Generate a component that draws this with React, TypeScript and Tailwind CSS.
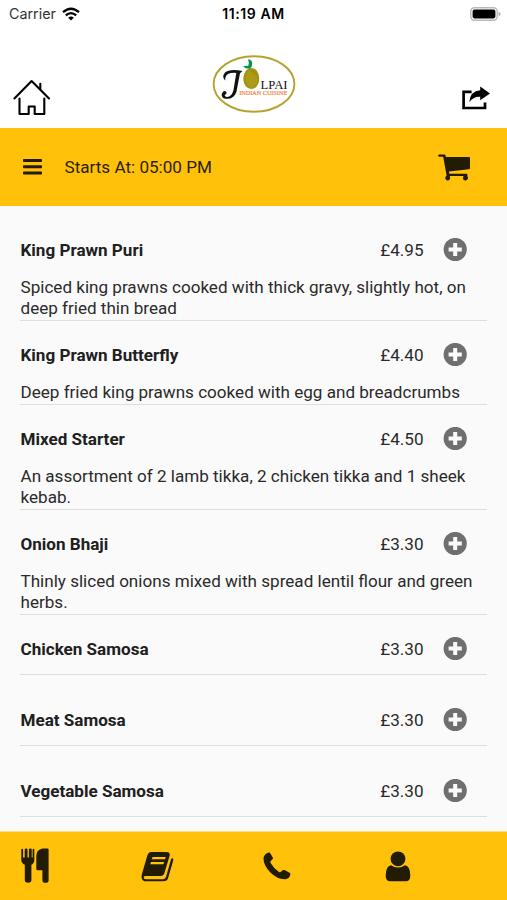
import React from "react";

type Item = { name: string; price: string; desc?: string[] };

const items: Item[] = [
  {
    name: "King Prawn Puri",
    price: "£4.95",
    desc: ["Spiced king prawns cooked with thick gravy, slightly hot, on", "deep fried thin bread"],
  },
  { name: "King Prawn Butterfly", price: "£4.40", desc: ["Deep fried king prawns cooked with egg and breadcrumbs"] },
  {
    name: "Mixed Starter",
    price: "£4.50",
    desc: ["An assortment of 2 lamb tikka, 2 chicken tikka and 1 sheek", "kebab."],
  },
  {
    name: "Onion Bhaji",
    price: "£3.30",
    desc: ["Thinly sliced onions mixed with spread lentil flour and green", "herbs."],
  },
  { name: "Chicken Samosa", price: "£3.30" },
  { name: "Meat Samosa", price: "£3.30" },
  { name: "Vegetable Samosa", price: "£3.30" },
];

function Wifi() {
  return (
    <svg width="18" height="14" viewBox="0 0 18 14" fill="none" stroke="#000" strokeWidth="2.3">
      <path d="M1 5.2Q9-1.8 17 5.2" />
      <path d="M3.8 8.3Q9 3.9 14.2 8.3" />
      <path d="M6.2 10.8Q9 8.2 11.8 10.8L9 13.6Z" fill="#000" stroke="none" />
    </svg>
  );
}

function Battery() {
  return (
    <svg width="31" height="14" viewBox="0 0 31 14">
      <rect x="0.8" y="0.8" width="26.4" height="12.4" rx="3.6" fill="#fff" stroke="#b9b9b9" strokeWidth="1.4" />
      <rect x="2.6" y="2.6" width="22.8" height="8.8" rx="1.8" fill="#000" />
      <path d="M28.6 4.8Q30.6 5.6 30.6 7T28.6 9.2Z" fill="#aaa" />
    </svg>
  );
}

function Home() {
  return (
    <svg width="38" height="37" viewBox="0 0 38 37" fill="none" stroke="#000" strokeWidth="2.1" strokeLinecap="round" strokeLinejoin="round">
      <path d="M1.4 19.5L18.6 2L36 19.5" />
      <path d="M27.3 10.2V4.8" />
      <path d="M6.5 19.5V35H15.7V27.5H21.7V35H31.3V19.5" />
    </svg>
  );
}

function Share() {
  return (
    <svg width="28" height="24" viewBox="0 0 28 24">
      <path d="M9.6 5.8H1.6V22H23V16.6" fill="none" stroke="#000" strokeWidth="2.7" />
      <path d="M18.2 .4L28 7.4L18.2 14.2V10.7Q11.5 10.2 7.3 16.2Q8 5 18.2 4.2Z" />
    </svg>
  );
}

function Logo() {
  return (
    <svg width="84" height="60" viewBox="0 0 84 60">
      <ellipse cx="42" cy="30" rx="40.4" ry="27.8" fill="#fff" stroke="#b6a230" strokeWidth="1.9" />
      <ellipse cx="39.3" cy="24.5" rx="8" ry="10.6" fill="#a39112" />
      <path d="M36 16.5Q32.5 22 34.5 29Q36 33 39 34.5Q44 32 46 26Q44 20 36 16.5Z" fill="#b5a01e" opacity=".6" />
      <path d="M31 12.6Q34.2 11.2 36.2 12Q37.6 9 36 5.2Q40.6 5.4 40.2 10.4Q40 13.6 37.6 14.8Q33.6 14.8 31 12.6Z" fill="#07924f" />
      <path
        d="M30.5 17Q17.5 14.5 12.8 18.7Q9.4 23 13.3 26.4Q12.7 20.4 18.6 19.1Q22 18.5 24.3 18.9L21.5 36Q19.7 43.2 14.7 43Q12 42.6 13 40.6Q14.4 40.9 14.6 38.6Q13.8 36.1 11.2 37.4Q7.7 42 12.2 44.5Q21.3 46.4 24.4 38L28 19.3Z"
        fill="#111"
      />
      <text x="48.5" y="35.3" fontSize="13.2" textLength="27" lengthAdjust="spacingAndGlyphs" fontFamily="Liberation Serif, serif" fill="#111">
        LPAI
      </text>
      <text x="27.2" y="41" fontSize="6.2" textLength="48" lengthAdjust="spacingAndGlyphs" fontFamily="Liberation Serif, serif" fill="#f58043" stroke="#f58043" strokeWidth=".2">
        INDIAN CUISINE
      </text>
    </svg>
  );
}

function Cart() {
  return (
    <svg width="33" height="28" viewBox="0 0 33 28" fill="#231c04">
      <path d="M1.2 .4H6.4Q7.3 .4 7.5 1.4L7.9 3H31Q32 3 32 4V14Q32 15 31 15.2L10.9 17.6L11.3 19.8H28.4Q29.4 19.8 29.4 20.8V22.4Q30.3 23.2 29.9 24.8Q29.1 26.8 27 26.6Q24.8 26.2 25 23.9L25.5 22H11.7Q12.5 23.8 11.8 25.3Q10.8 26.9 8.9 26.5Q6.8 25.8 7.3 23.3L8.6 21.4L5.2 2.8H1.2Q0 2.6 0 1.6T1.2 .4Z" />
    </svg>
  );
}

function Plus() {
  return (
    <svg width="24" height="24" viewBox="0 0 24 24">
      <circle cx="12.2" cy="11.5" r="11.6" fill="#6f6f6f" />
      <path d="M12.2 4.9V18.1M5.6 11.5H18.8" stroke="#fafafa" strokeWidth="4" />
    </svg>
  );
}

function Cutlery() {
  return (
    <svg width="28" height="36" viewBox="0 0 28 36" fill="#231c04">
      <path d="M1.2 .7Q2.1 .7 2.1 1.7V9.5H3.7V1.5Q3.7 .5 5.1 .5T6.5 1.5V9.5H7.9V1.5Q7.9 .5 9.3 .5T10.7 1.5V9.5H11.6V1.7Q11.6 .7 12.4 .7T13.3 1.7V12Q13.3 15.4 10.4 16.7V32Q10.4 34.8 7.1 34.8T3.8 32V16.7Q.3 15.4 .3 12V1.7Q.3 .7 1.2 .7Z" />
      <path d="M21.5 .5H26.3Q27.6 .5 27.6 1.8V32.2Q27.6 34.8 24.5 34.8T21.4 32.2V22.2H16.5Q15.3 22.2 15.3 21V8Q15.3 1.7 21.5 .5Z" />
    </svg>
  );
}

function Book() {
  return (
    <svg width="33" height="31" viewBox="0 0 33 31" fill="#231c04">
      <path
        fillRule="evenodd"
        d="M9.6 1H25.6Q29.4 1.2 28.6 4.8L23.3 22.6Q22.5 24.9 20 25H4.2Q2.3 25.2 2.7 27Q3.2 28.3 5 28.3H22.3Q24.3 28.2 25 26.1L30 8.6Q30.4 7 31.2 6.9Q32.7 7.4 32.2 9.4L27.1 27Q26.1 30.2 22.6 30.3H5Q1.5 30.3 .7 27.2Q.3 25 1.1 22.6L6.4 4.2Q7.2 1.2 9.6 1ZM11.6 5.9L10.8 8.2H24L24.7 5.9ZM10 10.9L9.2 13.2H22.4L23.2 10.9Z"
      />
    </svg>
  );
}

function Phone() {
  return (
    <svg width="28" height="28" viewBox="0 0 28 28" fill="#231c04">
      <path d="M5.6 .6Q6.8 .3 7.4 1.4L9.8 5.4Q10.4 6.5 9.5 7.3L7.7 9Q7.1 9.8 7.5 10.8Q10.6 16.4 16 20Q17.2 20.6 18 19.8L19.6 18.3Q20.5 17.6 21.5 18.1L26.6 20.8Q27.7 21.5 27.3 22.7Q26.2 26.8 22.2 27.2Q14.6 27.6 7.4 20.5Q.4 13.3 .5 6.2Q.9 2.3 5.6 .6Z" />
    </svg>
  );
}

function User() {
  return (
    <svg width="26" height="31" viewBox="0 0 26 31" fill="#231c04">
      <circle cx="13" cy="7.8" r="7.4" />
      <path d="M6 14.2Q9.2 16.6 13 16.6T20 14.2Q25.3 15.1 25.3 24.5Q25.3 30.3 21 30.3H5Q.7 30.3 .7 24.5Q.7 15.1 6 14.2Z" />
    </svg>
  );
}

export default function App() {
  return (
    <div className="flex h-[900px] w-[507px] flex-col overflow-hidden bg-[#fafafa] font-[Roboto,sans-serif] text-[#2a2a2a]">
      <header className="flex h-32 shrink-0 flex-col bg-white">
        <div className="flex h-[27px] items-center justify-between pr-1.5 pl-[9px] font-[Inter,sans-serif] text-black">
          <div className="flex flex-1 items-center gap-1.5">
            <span className="text-[14.3px] text-[#333]">Carrier</span>
            <Wifi />
          </div>
          <span className="mr-[3px] text-[14px] font-semibold tracking-[0.6px] whitespace-nowrap">11:19 AM</span>
          <div className="flex flex-1 justify-end">
            <Battery />
          </div>
        </div>
        <div className="grid flex-1 grid-cols-3 items-start px-[13px] pt-px">
          <div className="pt-[51px]">
            <Home />
          </div>
          <div className="flex justify-center pt-[26px] pl-px">
            <Logo />
          </div>
          <div className="flex justify-end pt-[58px] pr-1">
            <Share />
          </div>
        </div>
      </header>

      <div className="flex h-[78px] shrink-0 items-center bg-[#ffc10a] pr-[36px] pl-[23px]">
        <svg width="19" height="16" viewBox="0 0 19 16" fill="#231c04">
          <rect y="0" width="19" height="3" rx="0.8" />
          <rect y="6.3" width="19" height="3" rx="0.8" />
          <rect y="12.6" width="19" height="3" rx="0.8" />
        </svg>
        <span className="ml-[22.5px] flex-1 pt-0.5 text-[17.1px] text-[#2b2206]">Starts At: 05:00 PM</span>
        <div className="pt-0.5">
          <Cart />
        </div>
      </div>

      <main className="flex-1 overflow-hidden px-5 pt-2.5">
        {items.map((item) => (
          <section
            key={item.name}
            className={`border-b border-[#dedede] pt-3.5 ${item.desc ? "pb-px" : "mb-[11px] pb-[5px]"}`}
          >
            <div className="flex h-10 items-center pr-5">
              <h2 className="flex-1 pt-0.5 pl-[0.5px] text-[17.07px] font-bold text-[#202020]">{item.name}</h2>
              <span className="mr-[19.5px] pt-0.5 text-[17.1px]">{item.price}</span>
              <Plus />
            </div>
            {item.desc && (
              <p className="mt-[7px] pl-[0.5px] text-[17.08px] leading-[21px] whitespace-nowrap">
                {item.desc.map((line) => (
                  <span key={line} className="block">
                    {line}
                  </span>
                ))}
              </p>
            )}
          </section>
        ))}
      </main>

      <nav className="flex h-[69px] shrink-0 items-center border-t border-[#fde08a] bg-[#ffc10a] pl-[21px]">
        <div className="w-[120px]">
          <Cutlery />
        </div>
        <div className="w-[122px]">
          <Book />
        </div>
        <div className="w-[122px]">
          <Phone />
        </div>
        <User />
      </nav>
    </div>
  );
}
